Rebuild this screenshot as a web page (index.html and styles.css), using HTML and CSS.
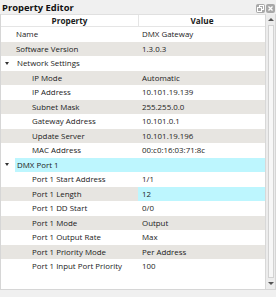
FILE: index.html
```html
<!DOCTYPE html>
<html>
<head>
<meta charset="utf-8">
<link rel="stylesheet" href="styles.css">
</head>
<body>
<div class="panel">
  <div class="titlebar">
    <span class="title">Property Editor</span>
    <div class="tbtns">
      <svg class="tbtn" width="9" height="9" viewBox="0 0 9 9"><rect x="0" y="0" width="9" height="9" rx="2" fill="#a8a8a8"/><rect x="3.5" y="1.5" width="4" height="4" fill="none" stroke="#fff" stroke-width="1"/><rect x="1.5" y="3.5" width="4" height="4" fill="#a8a8a8" stroke="#fff" stroke-width="1"/></svg>
      <svg class="tbtn" width="9" height="9" viewBox="0 0 9 9"><rect x="0" y="0" width="9" height="9" rx="2" fill="#a8a8a8"/><path d="M2.5 2.5 L6.5 6.5 M6.5 2.5 L2.5 6.5" stroke="#fff" stroke-width="1.3"/></svg>
    </div>
  </div>
  <div class="frame">
    <div class="view">
      <div class="header">
        <div class="hcell">Property</div>
        <div class="hcell">Value</div>
      </div>
      <div class="rows">
        <div class="row"><div class="pc l0">Name</div><div class="vc">DMX Gateway</div></div>
        <div class="row alt"><div class="pc l0">Software Version</div><div class="vc">1.3.0.3</div></div>
        <div class="row"><div class="pc lg"><span class="arrow"></span>Network Settings</div><div class="vc"></div></div>
        <div class="row alt"><div class="pc l1">IP Mode</div><div class="vc">Automatic</div></div>
        <div class="row"><div class="pc l1">IP Address</div><div class="vc">10.101.19.139</div></div>
        <div class="row alt"><div class="pc l1">Subnet Mask</div><div class="vc">255.255.0.0</div></div>
        <div class="row"><div class="pc l1">Gateway Address</div><div class="vc">10.101.0.1</div></div>
        <div class="row alt"><div class="pc l1">Update Server</div><div class="vc">10.101.19.196</div></div>
        <div class="row"><div class="pc l1">MAC Address</div><div class="vc">00:c0:16:03:71:8c</div></div>
        <div class="row group"><div class="pc lg"><span class="arrow"></span><span class="glabel">DMX Port 1</span></div><div class="vc cyan"></div></div>
        <div class="row"><div class="pc l1">Port 1 Start Address</div><div class="vc">1/1</div></div>
        <div class="row alt"><div class="pc l1">Port 1 Length</div><div class="vc cyan">12</div></div>
        <div class="row"><div class="pc l1">Port 1 DD Start</div><div class="vc">0/0</div></div>
        <div class="row alt"><div class="pc l1">Port 1 Mode</div><div class="vc">Output</div></div>
        <div class="row"><div class="pc l1">Port 1 Output Rate</div><div class="vc">Max</div></div>
        <div class="row alt"><div class="pc l1">Port 1 Priority Mode</div><div class="vc">Per Address</div></div>
        <div class="row"><div class="pc l1">Port 1 Input Port Priority</div><div class="vc">100</div></div>
      </div>
    </div>
    <div class="scrollbar">
      <div class="sarrow up"></div>
      <div class="thumb"></div>
      <div class="sarrow down"></div>
    </div>
  </div>
  <div class="footer"></div>
</div>
</body>
</html>
```
FILE: styles.css
```css
html, body {
  margin: 0;
  padding: 0;
}
body {
  width: 276px;
  height: 297px;
  background: #f0f0f0;
  font-family: "Open Sans", "Noto Sans", sans-serif;
  font-size: 7.9px;
  color: #1b1b1b;
  overflow: hidden;
}
.panel {
  display: flex;
  flex-direction: column;
  height: 297px;
}
.titlebar {
  height: 14px;
  display: flex;
  align-items: center;
  justify-content: space-between;
  padding: 0 1px 0 2px;
}
.title {
  font-weight: bold;
  font-size: 9.4px;
  color: #111;
}
.tbtns {
  display: flex;
  gap: 1px;
  margin-top: 2px;
}
.tbtn {
  display: block;
}
.frame {
  height: 276px;
  display: flex;
  border: 1px solid #d6d6d6;
  border-top: none;
  box-sizing: border-box;
  background: #fff;
}
.view {
  flex: 1;
  display: flex;
  flex-direction: column;
  min-width: 0;
}
.header {
  height: 13px;
  display: grid;
  grid-template-columns: 137px 1fr;
  border-top: 1px solid #e0e0e0;
  border-bottom: 1px solid #e5e5e5;
  box-sizing: border-box;
  background: #fff;
}
.hcell {
  font-weight: bold;
  font-size: 8.2px;
  text-align: center;
  line-height: 11px;
}
.hcell + .hcell {
  border-left: 1px solid #e5e5e5;
}
.rows {
  display: flex;
  flex-direction: column;
}
.row {
  height: 14.5px;
  display: grid;
  grid-template-columns: 137px 1fr;
  background: #fff;
}
.row.alt {
  background: #e7e5e1;
}
.pc, .vc {
  display: flex;
  align-items: center;
  white-space: nowrap;
  overflow: hidden;
}
.vc {
  padding-left: 4px;
}
.l0 {
  padding-left: 15px;
}
.l1 {
  padding-left: 31px;
}
.lg {
  padding-left: 4px;
}
.arrow {
  width: 0;
  height: 0;
  border-left: 2.5px solid transparent;
  border-right: 2.5px solid transparent;
  border-top: 3.5px solid #333;
  margin-right: 8px;
}
.group .pc {
  background: linear-gradient(to right, #fff 14px, #bdf6fe 14px);
}
.cyan {
  background: #bdf6fe;
}
.scrollbar {
  width: 10px;
  display: flex;
  flex-direction: column;
  align-items: center;
  background: #ececec;
  border-left: 1px solid #d8d8d8;
  padding: 4px 0 4px;
  box-sizing: border-box;
}
.sarrow {
  width: 0;
  height: 0;
  border-left: 3px solid transparent;
  border-right: 3px solid transparent;
}
.sarrow.up {
  border-bottom: 3px solid #555;
}
.sarrow.down {
  border-top: 3px solid #555;
}
.thumb {
  flex: 1;
  width: 6px;
  margin: 4px 0;
  background: #f7f7f7;
  border: 1px solid #d2d2d2;
  box-sizing: border-box;
}
.footer {
  flex: 1;
  background: #f0f0f0;
}
```
